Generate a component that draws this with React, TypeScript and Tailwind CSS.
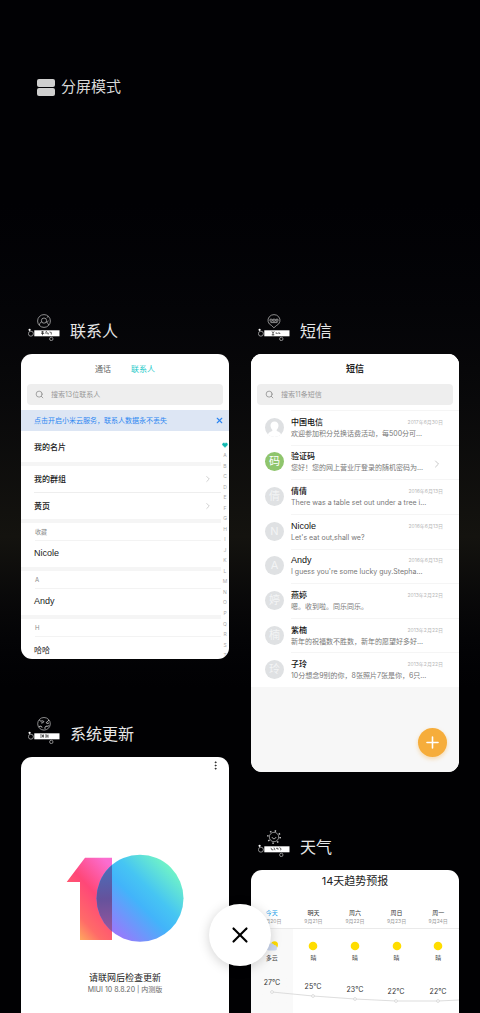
import { ReactNode } from "react";
import { ChevronRight, Heart, MoreVertical, Plus, Search, User, X } from "lucide-react";

type AppKind = "contacts" | "messages" | "update" | "weather";

const letters = "ABCDEFGHIJKLMNOPQRST".split("");

const contactGroups = [
  { label: "收藏", name: "Nicole" },
  { label: "A", name: "Andy" },
  { label: "H", name: "哈哈" },
];

const messages = [
  { name: "中国电信", text: "欢迎参加积分兑换话费活动，每500分可...", date: "2017年6月30日", avatar: "" },
  { name: "验证码", text: "您好！您的网上营业厅登录的随机密码为...", date: "", avatar: "码" },
  { name: "倩倩", text: "There was a table set out under a tree i...", date: "2016年6月13日", avatar: "倩" },
  { name: "Nicole", text: "Let's eat out,shall we?", date: "2016年6月13日", avatar: "N" },
  { name: "Andy", text: "I guess you're some lucky guy.Stepha...", date: "2016年6月13日", avatar: "A" },
  { name: "燕婷", text: "嗯。收到啦。同乐同乐。", date: "2013年2月22日", avatar: "婷" },
  { name: "紫楠", text: "新年的祝福数不胜数，新年的愿望好多好...", date: "2013年2月22日", avatar: "楠" },
  { name: "子玲", text: "10分想念9别的你，8张照片7张是你，6只...", date: "2013年2月22日", avatar: "玲" },
];

const days = [
  { day: "今天", date: "9月20日", sky: "多云", temp: 27, x: 21, y: 12 },
  { day: "明天", date: "9月21日", sky: "晴", temp: 25, x: 62, y: 16 },
  { day: "周六", date: "9月22日", sky: "晴", temp: 23, x: 104, y: 19 },
  { day: "周日", date: "9月23日", sky: "晴", temp: 22, x: 145, y: 21 },
  { day: "周一", date: "9月24日", sky: "晴", temp: 22, x: 187, y: 21 },
];

const isLatin = (name: string) => /^[A-Za-z]/.test(name);

function AppIcon({ kind }: { kind: AppKind }) {
  return (
    <svg width="32" height="27" viewBox="0 0 32 27" fill="none" stroke="#c4c4c4" strokeWidth="0.7">
      {kind === "contacts" && (
        <>
          <circle cx="16" cy="7" r="6.4" />
          <circle cx="16" cy="6.6" r="2.6" />
          <path d="M11.3 11.2c.4-2.200 1.400-3.200 2.600-3.400M20.700 11.200c-.4-1.600-1.200-2.400-2.400-2.900M18.800 3.400l1.600-1M18.600 7.500c.8.600 1.600.2 1.800-.8" />
        </>
      )}
      {kind === "messages" && (
        <>
          <path d="M13.5 11.5a6 5.7 0 1 1 5 0l-2.600 2.300z" />
          <path d="M12 5.200h2.200v2H12zM15 5.200h2.200v2H15zM18 5.200h2v2h-2zM12.500 8.600h7" />
        </>
      )}
      {kind === "update" && (
        <>
          <circle cx="16" cy="6.8" r="6.300" />
          <path
            strokeWidth="1"
            d="M11.300 3c1.500 2.200 3.300.2 4.200 1.200s-.8 1.600-2.300 1.800M20.800 3c-.4 1.700-2 1.300-2.400 2.500s1.600 1 2.600.4M10.800 9.800c1.500-1.200 3.200-.6 3.200.8M17 11.800c-.4-1.800.6-2.800 2-2.600s1.700-.4 2.200-1"
          />
        </>
      )}
      {kind === "weather" && (
        <>
          <circle cx="16" cy="7" r="6.200" strokeWidth="1.600" strokeDasharray="1.4 3.47" />
          <circle cx="16" cy="7" r="4.700" />
          <path d="M14 7.200c.8 2 3.200 2 4 0" strokeWidth="1" />
        </>
      )}
      <circle cx="2.900" cy="19.700" r="2.500" />
      <circle cx="1.600" cy="15.800" r="1.100" fill="#fff" stroke="none" />
      <rect x="6.300" y="16.300" width="25.200" height="6" fill="#fff" stroke="none" />
      <circle cx="23.300" cy="24.900" r="1.700" />
      {kind === "contacts" && (
        <path stroke="#222" d="M13 18h3M14.500 17v4.200M13.200 19.500h3M17.500 18l1.500-.6M17.200 19h3v1.500M21.500 18l1.800.5v2" />
      )}
      {kind === "messages" && (
        <path stroke="#222" d="M14 17.400l1 1.600 1.200-1.600M15 19v2.500M13.700 20.800h2.600M17.500 19h1.600v1M20 19h1.800v1" />
      )}
      {kind === "update" && (
        <path stroke="#222" d="M12 18h2.500v2H12M15.500 17.500v3M17 18h2v2h-2M20 17.600v3.200" />
      )}
      {kind === "weather" && (
        <path stroke="#222" d="M13 17.800l.8 2h1.600M16 17.600l1 2.600M18 18.300h2v1.500M21.500 17.600l1.600 1.200-.6 1.500" />
      )}
    </svg>
  );
}

function RecentApp({ kind, title, children }: { kind: AppKind; title: string; children: ReactNode }) {
  return (
    <section className="flex flex-col gap-[13px]">
      <h2 className="flex items-end gap-[10px] pl-[7px] text-[16px] leading-[20px] text-[#e8e8e8]">
        <AppIcon kind={kind} />
        {title}
      </h2>
      <div className="overflow-hidden rounded-[11px] bg-white">{children}</div>
    </section>
  );
}

function SearchBox({ id, placeholder }: { id: string; placeholder: string }) {
  return (
    <div className="mx-[6px] flex h-[21px] items-center gap-[7px] rounded-[4px] bg-[#eeeeee] px-2">
      <label htmlFor={id} aria-label={placeholder}>
        <Search size={9} color="#8a8a8a" />
      </label>
      <input
        id={id}
        type="text"
        placeholder={placeholder}
        className="min-w-0 flex-1 bg-transparent text-[7px] leading-[10px] outline-none placeholder:text-[#999]"
      />
    </div>
  );
}

function Contacts() {
  return (
    <div className="h-[305px]">
      <div className="flex h-[30px] items-center justify-center gap-5 text-[8px]">
        <button className="text-[#666]">通话</button>
        <button className="text-[#1cc9c9]">联系人</button>
      </div>
      <SearchBox id="search-contacts" placeholder="搜索13位联系人" />
      <div className="mt-[5px] flex h-[21px] items-center justify-between bg-[#dde6f4] pr-[5px] pl-[13px]">
        <a href="#cloud" className="text-[7px] leading-[10px] text-[#2c86f2]">
          点击开启小米云服务，联系人数据永不丢失
        </a>
        <button aria-label="关闭">
          <X size={9} className="text-[#2c86f2]" strokeWidth={3} />
        </button>
      </div>
      <div className="flex text-[8px] text-[#222]">
        <div className="flex-1">
          <div className="flex h-[31px] items-center pl-[13px] font-medium">我的名片</div>
          <div className="h-1 bg-[#f5f5f5]" />
          <div className="ml-[13px] flex h-[27px] items-center justify-between border-b border-[#eeeeee] pr-2 font-medium">
            我的群组
            <ChevronRight size={10} color="#b5b5b5" strokeWidth={1.5} />
          </div>
          <div className="ml-[13px] flex h-[26px] items-center justify-between pr-2 font-medium">
            黄页
            <ChevronRight size={10} color="#b5b5b5" strokeWidth={1.5} />
          </div>
          {contactGroups.map(({ label, name }) => (
            <div key={name}>
              <div className="h-1 bg-[#f5f5f5]" />
              <div className="ml-[14px] flex h-[18px] items-center border-b border-[#f3f3f3] text-[6px] text-[#888]">
                {label}
              </div>
              <div
                className={`flex h-[26px] items-center pl-[13px] ${
                  isLatin(name) ? "font-['Liberation_Sans',sans-serif] text-[9px]" : ""
                }`}
              >
                {name}
              </div>
            </div>
          ))}
        </div>
        <ul className="mt-[9px] flex h-[221px] w-2 flex-col text-[5px] text-[#aaa]">
          <li className="flex flex-1 items-center justify-center">
            <Heart size={6} color="#10b8b0" fill="#10b8b0" />
          </li>
          {letters.map((letter) => (
            <li key={letter} className="flex flex-1 items-center justify-center">
              {letter}
            </li>
          ))}
        </ul>
      </div>
    </div>
  );
}

function Avatar({ text }: { text: string }) {
  if (!text) {
    return (
      <span className="flex size-[19px] items-end justify-center overflow-hidden rounded-full bg-[#dee0e2]">
        <svg width="19" height="19" viewBox="0 0 19 19" fill="#fff">
          <path d="M9.500 3.500c2.600 0 4 1.700 4 4 0 2-.9 3.300-1.800 4.200v1.400c1.800.7 3.800 1.300 4.300 3.400V19H3v-2.500c.5-2.100 2.500-2.700 4.300-3.400v-1.400c-.9-.9-1.800-2.200-1.800-4.200 0-2.300 1.400-4 4-4z" />
        </svg>
      </span>
    );
  }
  return (
    <span
      className={`flex size-[19px] items-center justify-center rounded-full text-[11px] leading-none ${
        text === "码" ? "bg-[#8fc56d] text-white" : "bg-[#dfe1e3] text-[#f3f4f5]"
      }`}
    >
      {text}
    </span>
  );
}

function Messages() {
  return (
    <div className="relative bg-[#f7f7f7] pb-[85px]">
      <div className="bg-white">
        <h3 className="flex h-[30px] items-center justify-center text-[9px] font-bold text-[#222]">短信</h3>
        <SearchBox id="search-messages" placeholder="搜索11条短信" />
        <ul className="mt-[5px] grid h-[277px] grid-rows-8">
          {messages.map(({ name, text, date, avatar }) => (
            <li key={name} className="flex items-center gap-[7px] pl-[14px]">
              <Avatar text={avatar} />
              <div className="flex h-full min-w-0 flex-1 flex-col justify-center border-t border-[#f5f5f5] pr-4">
                <div className="flex items-center justify-between">
                  <span
                    className={`leading-[11px] text-[#111] ${
                      isLatin(name) ? "font-['Liberation_Sans',sans-serif] text-[9px]" : "text-[8px] font-medium"
                    }`}
                  >
                    {name}
                  </span>
                  <span className="text-[5px] leading-[11px] text-[#b8b8b8]">{date}</span>
                </div>
                <div className="flex items-center justify-between text-[7px] leading-[11px] text-[#777]">
                  <p className="whitespace-nowrap">{text}</p>
                  {!date && <ChevronRight className="-mt-2 shrink-0" size={12} color="#b5b5b5" strokeWidth={1.5} />}
                </div>
              </div>
            </li>
          ))}
        </ul>
      </div>
      <button
        aria-label="新建短信"
        className="absolute right-3 bottom-[15px] flex size-[29px] items-center justify-center rounded-full bg-[#f6ad3b] text-white shadow-[0_2px_4px_#f6ad3b66]"
      >
        <Plus size={19} strokeWidth={2} />
      </button>
    </div>
  );
}

function SystemUpdate() {
  return (
    <div className="flex h-[300px] flex-col items-center">
      <button aria-label="更多" className="mt-[3px] mr-2 self-end">
        <MoreVertical size={11} color="#222" />
      </button>
      <svg className="mt-[83px]" width="118" height="88" viewBox="0 0 118 88">
        <defs>
          <linearGradient id="one" x1="0.2" y1="1" x2="0.8" y2="0">
            <stop offset="0" stopColor="#ffb55c" />
            <stop offset="0.25" stopColor="#ff6b68" />
            <stop offset="0.6" stopColor="#ff4778" />
            <stop offset="1" stopColor="#fb6dd0" />
          </linearGradient>
          <linearGradient id="zero" x1="0.2" y1="0.9" x2="0.9" y2="0.2">
            <stop offset="0" stopColor="#9a78fc" />
            <stop offset="0.45" stopColor="#42b4fa" />
            <stop offset="0.65" stopColor="#46c5f3" />
            <stop offset="1" stopColor="#6ff2c8" />
          </linearGradient>
          <linearGradient id="overlap" gradientUnits="userSpaceOnUse" x1="36" y1="10" x2="40" y2="80">
            <stop offset="0" stopColor="#4770bc" />
            <stop offset="0.5" stopColor="#65529c" />
            <stop offset="1" stopColor="#9a569c" />
          </linearGradient>
          <clipPath id="oneShape">
            <path d="M19 3.700h27V86H14V28H.7z" />
          </clipPath>
        </defs>
        <path d="M19 3.700h27V86H14V28H.7z" fill="url(#one)" />
        <circle cx="74" cy="44.300" r="43.500" fill="url(#zero)" />
        <circle cx="74" cy="44.300" r="43.500" fill="url(#overlap)" clipPath="url(#oneShape)" />
      </svg>
      <p className="mt-[30px] text-[9px] leading-[12px] text-[#222]">请联网后检查更新</p>
      <p className="text-[7px] leading-[12px] text-[#666]">MIUI 10 8.8.20 | 内测版</p>
    </div>
  );
}

function Weather() {
  return (
    <div className="h-[190px]">
      <h3 className="flex h-[22px] items-center justify-center text-[11px] text-[#222]">14天趋势预报</h3>
      <div className="mt-4 grid grid-cols-5 text-center">
        {days.map(({ day, date, sky }, index) => (
          <div key={day}>
            <div className="h-[21px] border-b border-[#eaeaea]">
              <p className={`text-[6px] leading-[9px] ${index === 0 ? "text-[#1d9fe8]" : "text-[#333]"}`}>{day}</p>
              <p className="text-[5px] leading-[9px] text-[#999]">{date}</p>
            </div>
            <div className={`flex h-[46px] flex-col items-center pt-3 ${index === 0 ? "bg-[#f9f9f9]" : ""}`}>
              <svg width="12" height="10" viewBox="0 0 12 10">
                {index === 0 ? (
                  <>
                    <circle cx="8.500" cy="3.800" r="3.500" fill="#ffdc00" />
                    <path d="M2.500 9.500a2.500 2.500 0 0 1-.3-4.800 3.200 3.200 0 0 1 6-.7 2.800 2.800 0 0 1 .8 5.500z" fill="#cbd7ef" />
                  </>
                ) : (
                  <circle cx="6" cy="5" r="4.300" fill="#ffdd00" />
                )}
              </svg>
              <p className="mt-[2px] text-[6px] leading-[9px] text-[#444]">{sky}</p>
            </div>
          </div>
        ))}
      </div>
      <svg className="block w-full bg-linear-to-r from-[#f9f9f9] from-20% to-white to-20%" viewBox="0 0 208 90">
        <polyline
          points={days.map(({ x, y }) => `${x},${y + 5}`).join(" ") + " 208,25"}
          fill="none"
          stroke="#d4d4d4"
          strokeWidth="0.8"
        />
        {days.map(({ day, temp, x, y }) => (
          <g key={day}>
            <circle cx={x} cy={y + 5} r="1.400" fill="#fff" stroke="#cfcfcf" strokeWidth="0.7" />
            <text x={x} y={y - 2} textAnchor="middle" fontSize="7" fill="#333">
              {temp}℃
            </text>
          </g>
        ))}
      </svg>
    </div>
  );
}

export default function App() {
  return (
    <main className="relative h-screen overflow-hidden bg-linear-to-b from-[#010104] from-20% via-[#14130f] via-53% to-[#010103] to-68% px-[21px] font-['Inter','Noto_Sans_CJK_SC',sans-serif]">
      <button className="mt-[77px] ml-4 flex h-5 items-center gap-[6px] text-[15px] leading-5 text-[#d8d8d8]">
        <span className="flex flex-col gap-[1px]">
          <span className="h-2 w-[18px] rounded-[2px] bg-[#cfcfcf]" />
          <span className="h-2 w-[18px] rounded-[2px] bg-[#cfcfcf]" />
        </span>
        分屏模式
      </button>
      <div className="mt-[217px] grid grid-cols-2 items-start gap-[22px]">
        <div className="flex flex-col gap-[58px]">
          <RecentApp kind="contacts" title="联系人">
            <Contacts />
          </RecentApp>
          <RecentApp kind="update" title="系统更新">
            <SystemUpdate />
          </RecentApp>
        </div>
        <div className="flex flex-col gap-[58px]">
          <RecentApp kind="messages" title="短信">
            <Messages />
          </RecentApp>
          <RecentApp kind="weather" title="天气">
            <Weather />
          </RecentApp>
        </div>
      </div>
      <button
        aria-label="清除全部"
        className="absolute bottom-[47px] left-1/2 flex size-[62px] -translate-x-1/2 items-center justify-center rounded-full bg-white text-black shadow-[0_2px_12px_#0000002e]"
      >
        <X size={26} strokeWidth={2} />
      </button>
    </main>
  );
}
